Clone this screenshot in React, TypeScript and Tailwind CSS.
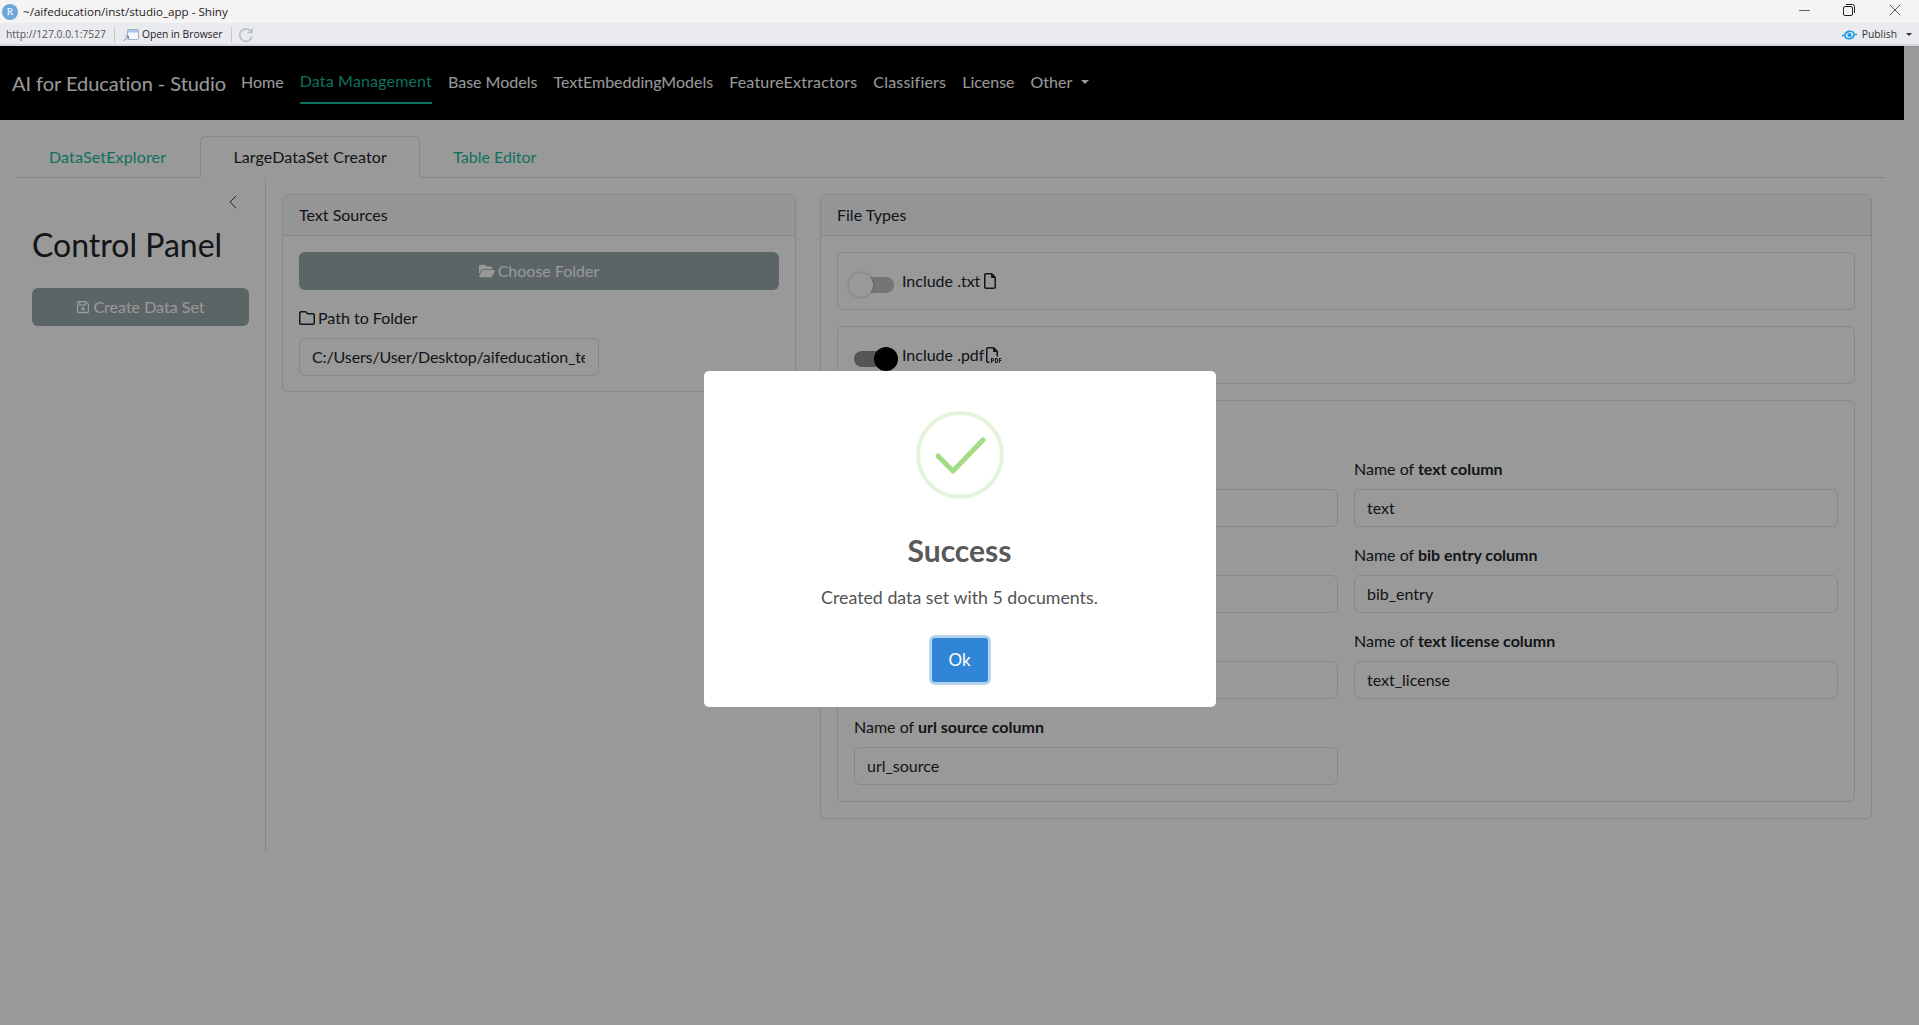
import React from 'react';
import { ChevronLeft, Minus, X } from 'lucide-react';
import { FaFolderOpen, FaRegFile, FaRegFilePdf, FaRegFloppyDisk, FaRegFolder } from 'react-icons/fa6';

const LATO = "font-['Lato','Liberation_Sans',sans-serif]";

const navItems = [
  { label: 'Home', cls: '' },
  { label: 'Data Management', cls: 'border-b-2 border-[#18bc9c] text-[#18bc9c] tracking-[0.16px]' },
  { label: 'Base Models', cls: '' },
  { label: 'TextEmbeddingModels', cls: '' },
  { label: 'FeatureExtractors', cls: 'tracking-[0.2px]' },
  { label: 'Classifiers', cls: 'tracking-[0.2px]' },
  { label: 'License', cls: '' },
];

const columnRows = [
  { right: 'text column', rightValue: 'text' },
  { right: 'bib entry column', rightValue: 'bib_entry' },
  { right: 'text license column', rightValue: 'text_license' },
];

const Toggle = ({ on }: { on: boolean }) => (
  <div className={on
    ? 'relative mt-[7px] h-4 w-10 shrink-0 rounded-full bg-[#8e8e8e]'
    : 'relative mt-[7px] h-4 w-10 shrink-0 rounded-full bg-[#c4c4c4]'}>
    <div className={on
      ? 'absolute right-[-4px] top-[-4px] size-6 rounded-full bg-black'
      : 'absolute left-[-5px] top-[-4px] size-6 rounded-full bg-white shadow-[0_0_3px_rgba(0,0,0,0.3)]'} />
  </div>
);

const TextField = ({ value }: { value?: string }) => (
  <div className="flex h-[38px] items-center rounded-md border border-[#dee2e6] bg-white px-3 text-[16px] text-[#212529]">{value}</div>
);

const App: React.FC = () => {
  return (
    <div className={`${LATO} relative h-[1025px] w-[1919px] overflow-hidden bg-white`}>
      {/* Fenster-Leiste von RStudio */}
      <div className="flex h-[23px] items-center bg-[#f5f3f3] pl-[2px] font-['Open_Sans',sans-serif] text-[11.6px] text-[#222]">
        <div className="flex size-4 items-center justify-center rounded-full bg-[#6ea6db] font-['Liberation_Serif',serif] text-[10px] text-white">R</div>
        <span className="ml-[5px]">~/aifeducation/inst/studio_app - Shiny</span>
        <div className="ml-auto flex items-center pb-[3px]">
          <Minus className="mr-[30px] size-[17px]" strokeWidth={1} />
          <svg viewBox="0 0 12 12" className="mr-[30px] size-3" fill="none" stroke="#222" strokeWidth="1">
            <rect x="0.5" y="2.5" width="9" height="9" rx="1.5" />
            <path d="M3 0.5h6.5a2 2 0 0 1 2 2V9" />
          </svg>
          <X className="mr-[14px] size-5" strokeWidth={0.9} />
        </div>
      </div>
      <div className="flex h-[23px] items-center border-b-2 border-[#d6d7da] bg-[#e9ebef] pl-[6px] pt-[2px] font-['Open_Sans',sans-serif] text-[10.3px] text-[#222]">
        <span className="text-[#555]">http://127.0.0.1:7527</span>
        <div className="mx-2 h-4 w-px bg-[#c8c8c8]" />
        <svg viewBox="0 0 16 14" className="h-[14px] w-[16px]">
          <rect x="4.5" y="1.5" width="11" height="10" rx="1" fill="#f4f7fb" stroke="#9fb2c8" />
          <rect x="5" y="2" width="10" height="2.5" fill="#a9c6e6" />
          <path d="M0.5 13 L5 8.5 M2.5 8 H5.5 V11" fill="none" stroke="#7f8c9c" strokeWidth="1" />
        </svg>
        <span className="ml-[3px]">Open in Browser</span>
        <div className="ml-2 mr-[6px] h-4 w-px bg-[#c8c8c8]" />
        <svg viewBox="0 0 16 16" className="size-4" fill="none" stroke="#b4bdc8" strokeWidth="1.6">
          <path d="M13.5 5.5A6.2 6.2 0 1 0 14 9" />
          <path d="M9.5 5.5h4.5V1.5" />
        </svg>
        <div className="ml-auto flex items-center pr-[7px]">
          <svg viewBox="0 0 18 12" className="mr-[4px] h-[12px] w-[17px]">
            <circle cx="9" cy="6" r="2.2" fill="#1a9be6" />
            <path d="M1 6.5h3c1-5 8-6 10-2M17 5.5h-3c-1 5-8 6-10 2" fill="none" stroke="#1a9be6" strokeWidth="1.7" />
          </svg>
          <span className="text-[#333]">Publish</span>
          <div className="ml-[9px] border-x-[3px] border-t-[3px] border-x-transparent border-t-[#333]" />
        </div>
      </div>

      <div className="w-[1904px]">
        {/* Navigation */}
        <nav className="flex h-[74px] items-center bg-black pl-3 text-white">
          <span className="mr-[15px] text-[20px] tracking-[-0.05px]">AI for Education - Studio</span>
          <div className="flex h-full items-center gap-4 text-[16px]">
            {navItems.map((item) => (
              <span key={item.label} className={`flex h-[42px] items-center pb-[2px] ${item.cls}`}>
                {item.label}
              </span>
            ))}
            <span className="flex h-[42px] items-center pb-[2px]">
              Other
              <span className="ml-[9px] border-x-[4px] border-t-[4px] border-x-transparent border-t-white" />
            </span>
          </div>
        </nav>

        {/* Tabs */}
        <div className="ml-4 mr-[19px] mt-4 flex h-[42px] border-b border-[#dee2e6] pl-[16px] text-[16px]">
          <div className="flex items-center px-[17px] tracking-[0.15px] text-[#18bc9c]">DataSetExplorer</div>
          <div className="mb-[-1px] ml-[17px] flex w-[220px] items-center justify-center rounded-t-md border border-[#dee2e6] border-b-white tracking-[0.1px] text-[#212529]">LargeDataSet Creator</div>
          <div className="flex items-center px-[33px] text-[#18bc9c]">Table Editor</div>
        </div>

        <div className="flex h-[674px] text-[#212529]">
          {/* Sidebar */}
          <aside className="relative ml-4 w-[250px] shrink-0 border-r border-[#dee2e6] px-4">
            <ChevronLeft className="absolute right-5 top-3 size-6 text-[#444]" strokeWidth={1} />
            <h2 className="mt-12 text-[32px] leading-[38px]">Control Panel</h2>
            <button className="mt-6 flex h-[38px] w-[217px] items-center justify-center gap-[3px] rounded-md bg-[#98a8aa] text-[16px] text-white">
              <FaRegFloppyDisk className="size-[14px]" />
              Create Data Set
            </button>
          </aside>

          <main className="flex flex-1 items-start gap-6 pl-4 pt-4">
            {/* Text Sources */}
            <section className="h-[198px] w-[514px] rounded-md border border-[#dee2e6]">
              <div className="flex h-[41px] items-center border-b border-[#dee2e6] bg-[#f8f8f8] px-4 text-[16px]">Text Sources</div>
              <div className="px-4 pt-4">
                <button className="flex h-[38px] w-full items-center justify-center gap-[3px] rounded-md bg-[#98a8aa] text-[16px] text-white">
                  <FaFolderOpen className="size-4" />
                  Choose Folder
                </button>
                <div className="mt-[18px] flex h-[20px] items-center gap-[3px] text-[16px]">
                  <FaRegFolder className="size-4" />
                  Path to Folder
                </div>
                <div className="mt-[10px] flex h-[38px] w-[300px] items-center rounded-md border border-[#dee2e6] px-3">
                  <span className="w-[273px] overflow-hidden whitespace-nowrap text-[16px] tracking-[-0.12px]">C:/Users/User/Desktop/aifeducation_te</span>
                </div>
              </div>
            </section>

            {/* File Types */}
            <section className="h-[625px] w-[1052px] rounded-md border border-[#dee2e6]">
              <div className="flex h-[41px] items-center border-b border-[#dee2e6] bg-[#f8f8f8] px-4 text-[16px]">File Types</div>
              <div className="flex flex-col gap-4 px-4 pt-4">
                <div className="flex h-[58px] items-center gap-2 rounded-md border border-[#dee2e6] pl-4">
                  <Toggle on={false} />
                  <span className="flex items-center gap-[2px] text-[16px]">Include .txt<FaRegFile className="size-4" /></span>
                </div>
                <div className="flex h-[58px] items-center gap-2 rounded-md border border-[#dee2e6] pl-4">
                  <Toggle on />
                  <span className="flex items-center gap-[2px] text-[16px]">Include .pdf<FaRegFilePdf className="size-4" /></span>
                </div>
                <div className="h-[402px] rounded-md border border-[#dee2e6] px-4 pt-[59px]">
                  <div className="grid grid-cols-2 gap-x-4 gap-y-[19px]">
                    {columnRows.map((row) => (
                      <React.Fragment key={row.right}>
                        <div>
                          <div className="mb-[9px] h-[20px]" />
                          <TextField />
                        </div>
                        <div>
                          <div className="mb-[9px] h-[20px] text-[16px] leading-[18px]">Name of <b>{row.right}</b></div>
                          <TextField value={row.rightValue} />
                        </div>
                      </React.Fragment>
                    ))}
                    <div>
                      <div className="mb-[9px] h-[20px] text-[16px] leading-[18px]">Name of <b>url source column</b></div>
                      <TextField value="url_source" />
                    </div>
                  </div>
                </div>
              </div>
            </section>
          </main>
        </div>
      </div>

      {/* Overlay und Erfolgsmeldung */}
      <div className="absolute inset-x-0 bottom-0 top-[46px] flex items-start justify-center bg-black/40 pt-[325px]">
        <div className="flex h-[336px] w-[512px] flex-col items-center rounded-[5px] bg-white pt-10">
          <svg viewBox="0 0 88 88" className="size-[88px]">
            <circle cx="44" cy="44" r="42" fill="none" stroke="#a5dc86" strokeOpacity="0.3" strokeWidth="4" />
            <path d="M22 45 L37 60 L67 29" fill="none" stroke="#a5dc86" strokeWidth="5" strokeLinecap="round" strokeLinejoin="round" />
          </svg>
          <div className="mt-[33px] text-[30px] font-bold leading-[36px] text-[#595959]">Success</div>
          <div className="mt-4 text-[17.8px] leading-[26px] text-[#545454]">Created data set with 5 documents.</div>
          <button className="mt-7 flex h-11 w-14 items-center justify-center rounded-[3px] bg-[#3085d6] text-[17px] text-white shadow-[0_0_0_3px_rgba(48,133,214,0.35)]">Ok</button>
        </div>
      </div>
    </div>
  );
};

export default App;
